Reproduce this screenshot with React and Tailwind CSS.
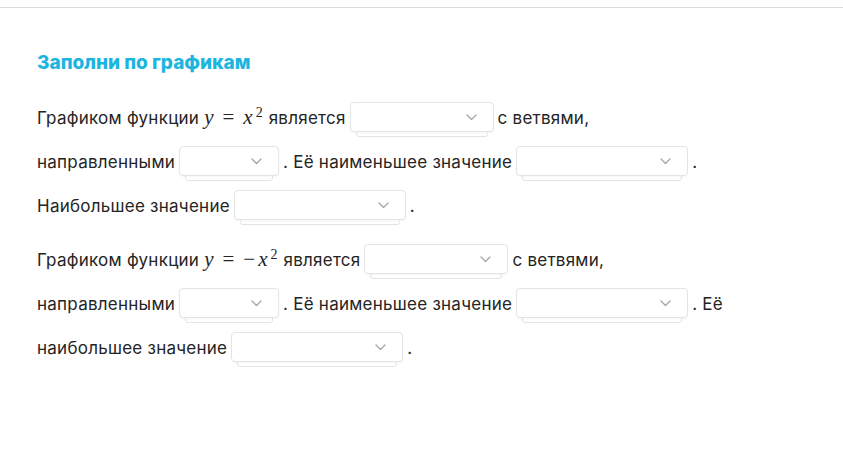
import React from 'react';

const Select = ({ width }) => (
    <span className="relative inline-block align-middle mx-[4px] -mt-[4px]" style={{ width }}>
        <span className="absolute left-[6px] right-[6px] bottom-[-5px] h-[10px] rounded-b-[3px] border border-[#e4e4e4] bg-white" />
        <span className="relative flex h-[30px] items-center justify-end rounded-[4px] border border-[#e4e4e4] bg-white pr-[16px] shadow-[0_1px_2px_rgba(0,0,0,0.04)]">
            <svg width="11" height="7" viewBox="0 0 11 7" fill="none">
                <path d="M1 1l4.5 4.5L10 1" stroke="#a8a8a8" strokeWidth="1.4" strokeLinecap="round" strokeLinejoin="round" />
            </svg>
        </span>
    </span>
);

// y = x^2 in a math-like serif
const Formula = ({ minus }) => (
    <span className="font-['Liberation_Serif',serif] text-[21px] tracking-normal ml-[5px] mr-[6px]">
        <i>y</i>
        <span className="mx-[9px]">=</span>
        {minus && <span className="mr-[3px]">−</span>}
        <i>x</i>
        <sup className="text-[14px] ml-[3px]">2</sup>
    </span>
);

const App = () => {
    return (
        <div className="w-[843px] h-[460px] bg-white font-['Inter',sans-serif] text-[#242424]">
            <div className="h-[8px] border-b border-[#dcdcdc]" />
            <div className="px-[37px] pt-[43px]">
                <h2 className="text-[19px] font-extrabold text-[#1cb5e0] leading-[24px] mb-[20px]">Заполни по графикам</h2>
                <p className="text-[17px] tracking-[0.25px] leading-[44px] mb-[9px]">
                    Графиком функции<Formula />является
                    <Select width={144} />
                    с ветвями,<br />
                    направленными
                    <Select width={100} />. Её наименьшее значение
                    <Select width={172} />.<br />
                    Наибольшее значение
                    <Select width={172} />.
                </p>
                <p className="text-[17px] tracking-[0.25px] leading-[44px]">
                    Графиком функции<Formula minus />является
                    <Select width={144} />
                    с ветвями,<br />
                    направленными
                    <Select width={100} />. Её наименьшее значение
                    <Select width={172} />. Её<br />
                    наибольшее значение
                    <Select width={172} />.
                </p>
            </div>
        </div>
    );
};

export default App;
